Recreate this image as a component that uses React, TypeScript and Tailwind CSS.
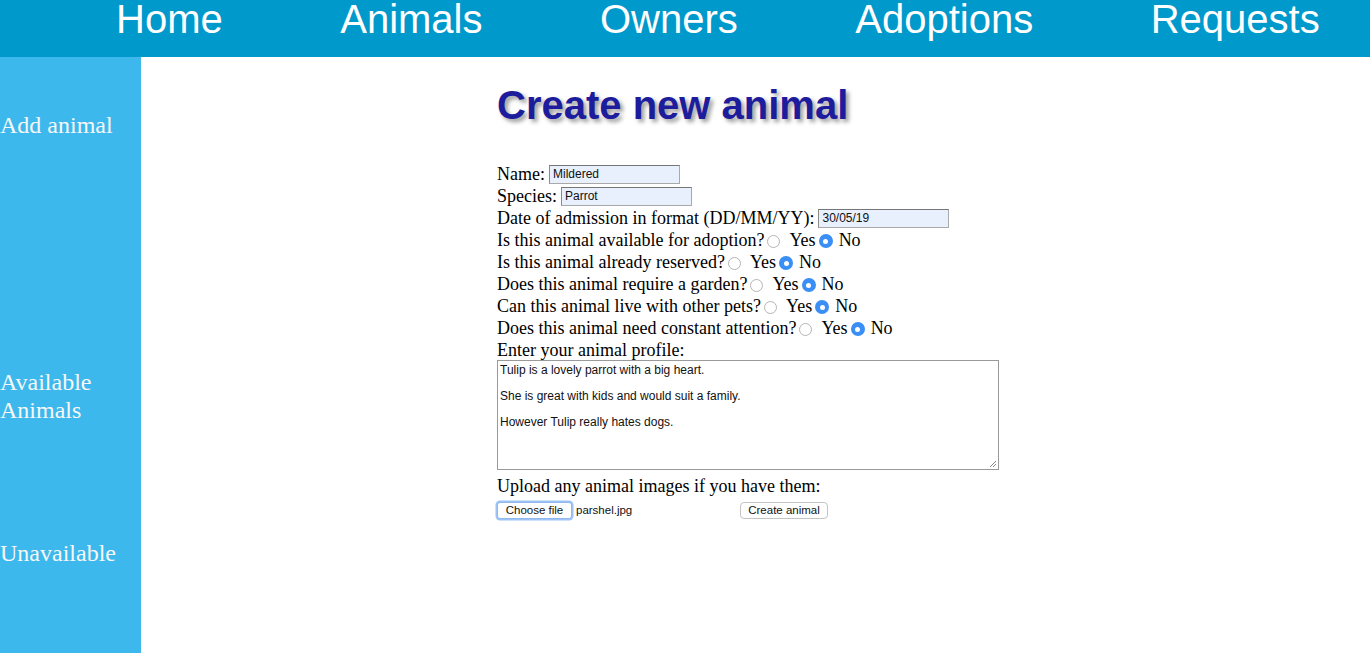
import React from 'react';

const navItems = ['Home', 'Animals', 'Owners', 'Adoptions', 'Requests'];

const questions = [
  'Is this animal available for adoption?',
  'Is this animal already reserved?',
  'Does this animal require a garden?',
  'Can this animal live with other pets?',
  'Does this animal need constant attention?',
];

const Radio = ({ checked, className = '' }: { checked?: boolean; className?: string }) =>
  checked ? (
    <span className={`inline-flex w-[14px] h-[14px] rounded-full bg-[#3a8ef6] items-center justify-center ${className}`}>
      <span className="w-[5px] h-[5px] rounded-full bg-white" />
    </span>
  ) : (
    <span className={`inline-block w-[13px] h-[13px] rounded-full border border-[#b5b5b5] bg-white ${className}`} />
  );

const TextBox = ({ value }: { value: string }) => (
  <span className="ml-[4px] inline-flex items-center w-[131px] h-[19px] bg-[#e8f0fe] border border-[#a9a9a9] border-t-[#767676] border-l-[#8a8a8a] pl-[3px] text-[12px] text-[#111] font-['Liberation_Sans',Arial,sans-serif]">
    {value}
  </span>
);

export default function App() {
  return (
    <div className="min-h-screen w-full bg-white font-['Liberation_Serif','Times_New_Roman',serif]">
      {/* TOP NAV */}
      <div className="h-[57px] bg-[#0099cc] flex items-start pl-[116px] gap-[117.5px]">
        {navItems.map((n) => (
          <span key={n} className="text-[40px] leading-[38px] text-white font-['Liberation_Sans',Arial,sans-serif]">
            {n}
          </span>
        ))}
      </div>

      <div className="flex">
        {/* SIDEBAR */}
        <div className="w-[141px] h-[596px] bg-[#3db8ec] text-[#f7f7f7] text-[24px] leading-[28px] flex flex-col shrink-0">
          <div className="mt-[54px]">Add animal</div>
          <div className="mt-[229px]">Available<br />Animals</div>
          <div className="mt-[115px]">Unavailable</div>
        </div>

        {/* MAIN */}
        <div className="pl-[356px] flex flex-col">
          <h1 className="mt-[25px] text-[40px] leading-[46px] font-bold text-[#1c1c9c] font-['Liberation_Sans',Arial,sans-serif] [text-shadow:3px_3px_4px_#9a9a9a]">
            Create new animal
          </h1>

          <div className="mt-[35px] text-[18px] text-black">
            <div className="h-[22px] flex items-center">
              Name:<TextBox value="Mildered" />
            </div>
            <div className="h-[22px] flex items-center">
              Species:<TextBox value="Parrot" />
            </div>
            <div className="h-[22px] flex items-center whitespace-pre">
              Date of admission in format (DD/MM/YY):<TextBox value="30/05/19" />
            </div>
            {questions.map((q) => (
              <div key={q} className="h-[22px] flex items-center whitespace-pre">
                {q}
                <Radio className="ml-[3px] mt-[2px]" />
                <span className="ml-[9px]">Yes</span>
                <Radio checked className="ml-[3px] mt-[2px]" />
                <span className="ml-[6px]">No</span>
              </div>
            ))}
            <div className="h-[20px] leading-[20px] mt-px">Enter your animal profile:</div>
            <div className="relative w-[502px] h-[110px] border border-[#9a9a9a] px-[2px] pt-[3px] text-[12px] leading-[13px] text-[#111] font-['Liberation_Sans',Arial,sans-serif]">
              <div>Tulip is a lovely parrot with a big heart.</div>
              <div className="h-[13px]" />
              <div>She is great with kids and would suit a family.</div>
              <div className="h-[13px]" />
              <div>However Tulip really hates dogs.</div>
              <svg className="absolute right-[1px] bottom-[1px]" width="8" height="8" viewBox="0 0 8 8">
                <path d="M7 1 L1 7 M7 4 L4 7" stroke="#888" strokeWidth="1" />
              </svg>
            </div>
            <div className="mt-[6px] h-[20px] leading-[20px]">Upload any animal images if you have them:</div>
            <div className="mt-[6px] flex items-center text-[11.5px] font-['Liberation_Sans',Arial,sans-serif] text-[#111]">
              <span className="w-[75px] h-[17px] flex items-center justify-center rounded-[3px] bg-white border border-[#8fb8ef] shadow-[0_0_0_1.5px_#9ec4f7]">
                Choose file
              </span>
              <span className="ml-[4px] w-[164px]">parshel.jpg</span>
              <span className="w-[88px] h-[17px] flex items-center justify-center rounded-[4px] bg-white border border-[#c4c4c4]">
                Create animal
              </span>
            </div>
          </div>
        </div>
      </div>
    </div>
  );
}
